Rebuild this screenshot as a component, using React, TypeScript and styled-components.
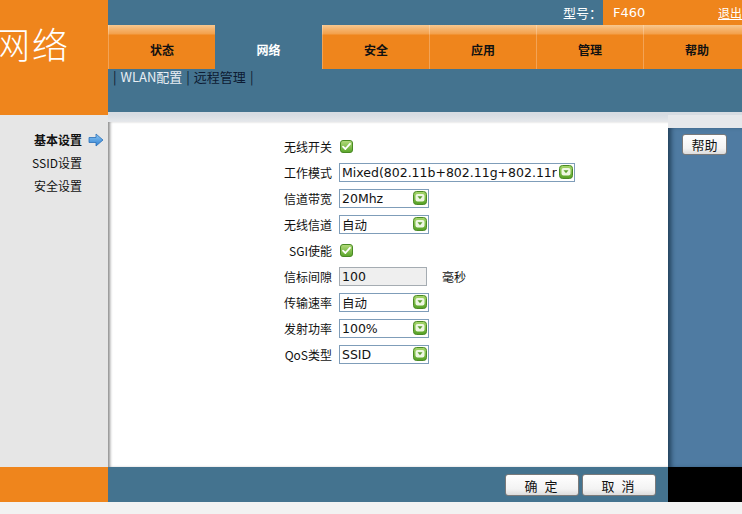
import React from "react";
import styled, { createGlobalStyle } from "styled-components";

const GlobalStyle = createGlobalStyle`
  html, body {
    margin: 0;
    padding: 0;
    background: #f2f2f2;
    font-family: "DejaVu Sans", "Noto Sans CJK SC", sans-serif;
    font-size: 12px;
  }
`;

const ORANGE = "#ef851c";
const BLUE = "#44738f";
const CJK = `"Noto Sans CJK SC", sans-serif`;
const LATIN = `"DejaVu Sans", "Noto Sans CJK SC", sans-serif`;

const tabs = ["状态", "网络", "安全", "应用", "管理", "帮助"];
const sideItems = ["基本设置", "SSID设置", "安全设置"];

type Field =
  | { label: string; kind: "check" }
  | { label: string; kind: "select"; value: string; wide?: boolean }
  | { label: string; kind: "text"; value: string; unit: string };

const fields: Field[] = [
  { label: "无线开关", kind: "check" },
  { label: "工作模式", kind: "select", value: "Mixed(802.11b+802.11g+802.11r", wide: true },
  { label: "信道带宽", kind: "select", value: "20Mhz" },
  { label: "无线信道", kind: "select", value: "自动" },
  { label: "SGI使能", kind: "check" },
  { label: "信标间隙", kind: "text", value: "100", unit: "毫秒" },
  { label: "传输速率", kind: "select", value: "自动" },
  { label: "发射功率", kind: "select", value: "100%" },
  { label: "QoS类型", kind: "select", value: "SSID" },
];

export default function App() {
  return (
    <Page>
      <GlobalStyle />
      <Header>
        <Logo>
          <LogoText>网络</LogoText>
        </Logo>
        <HeaderMain>
          <TopBar>
            <ModelLabel>型号：</ModelLabel>
            <ModelBox>
              <span>F460</span>
              <Logout>退出</Logout>
            </ModelBox>
          </TopBar>
          <TabBar>
            {tabs.map((t) => (
              <Tab key={t} $active={t === "网络"}>
                {t}
              </Tab>
            ))}
          </TabBar>
          <SubNav>
            <Sep>|</Sep>
            <SubLink $active>WLAN配置</SubLink>
            <Sep>|</Sep>
            <SubLink>远程管理</SubLink>
            <Sep>|</Sep>
          </SubNav>
          <Strip />
        </HeaderMain>
      </Header>

      <Body>
        <Sidebar>
          {sideItems.map((s, i) => (
            <SideItem key={s} $active={i === 0}>
              {s}
              {i === 0 && <ArrowIcon />}
            </SideItem>
          ))}
        </Sidebar>
        <Center>
          <Panel>
            <Form>
              {fields.map((f) => (
                <React.Fragment key={f.label}>
                  <Label>{f.label}</Label>
                  <Control>
                    {f.kind === "check" && <CheckIcon />}
                    {f.kind === "select" && (
                      <Select $wide={f.wide}>
                        <SelectText>{f.value}</SelectText>
                        <DropIcon />
                      </Select>
                    )}
                    {f.kind === "text" && (
                      <>
                        <TextBox>{f.value}</TextBox>
                        <Unit>{f.unit}</Unit>
                      </>
                    )}
                  </Control>
                </React.Fragment>
              ))}
            </Form>
          </Panel>
        </Center>
        <Right>
          <HelpPanel>
            <HelpButton>帮助</HelpButton>
          </HelpPanel>
        </Right>
      </Body>

      <Footer>
        <FooterLeft />
        <FooterMain>
          <Button>确 定</Button>
          <Button>取 消</Button>
        </FooterMain>
        <FooterRight />
      </Footer>
      <Bottom />
    </Page>
  );
}

function CheckIcon() {
  return (
    <svg width="13" height="13" viewBox="0 0 13 13" style={{ marginLeft: 1 }}>
      <defs>
        <linearGradient id="cg" x1="0" y1="0" x2="0" y2="1">
          <stop offset="0" stopColor="#b4dc7c" />
          <stop offset="1" stopColor="#5aa52a" />
        </linearGradient>
      </defs>
      <rect x="0.5" y="0.5" width="12" height="12" rx="2.5" fill="url(#cg)" stroke="#4a8a25" />
      <path d="M3 6.6 L5.4 9 L10 3.8" fill="none" stroke="#fff" strokeWidth="1.8" strokeLinecap="round" strokeLinejoin="round" />
    </svg>
  );
}

function DropIcon() {
  return (
    <svg width="14" height="14" viewBox="0 0 14 14">
      <defs>
        <linearGradient id="dg" x1="0" y1="0" x2="0" y2="1">
          <stop offset="0" stopColor="#a9d86e" />
          <stop offset="1" stopColor="#54a024" />
        </linearGradient>
      </defs>
      <rect x="0.5" y="0.5" width="13" height="13" rx="3" fill="url(#dg)" stroke="#4a8a25" />
      <rect x="2.5" y="3" width="9" height="7.5" rx="2" fill="#eef7e2" />
      <path d="M4.5 5.2 L9.5 5.2 L7 8.2 Z" fill="#5aa02c" />
    </svg>
  );
}

function ArrowIcon() {
  return (
    <svg width="16" height="14" viewBox="0 0 16 14" style={{ marginLeft: 6, marginRight: -22 }}>
      <defs>
        <linearGradient id="ag" x1="0" y1="0" x2="0" y2="1">
          <stop offset="0" stopColor="#8cc8f5" />
          <stop offset="1" stopColor="#2f7fd0" />
        </linearGradient>
      </defs>
      <path d="M1 4.5 H8 V1 L15 7 L8 13 V9.5 H1 Z" fill="url(#ag)" stroke="#2a6fb8" strokeWidth="0.8" />
    </svg>
  );
}

const Page = styled.div`
  width: 742px;
  height: 514px;
  display: flex;
  flex-direction: column;
  overflow: hidden;
`;

const Header = styled.div`
  display: flex;
  height: 115px;
  flex-shrink: 0;
`;

const Logo = styled.div`
  width: 108px;
  flex-shrink: 0;
  background: ${ORANGE};
  overflow: hidden;
`;

const LogoText = styled.div`
  font-family: ${CJK};
  font-weight: 300;
  font-size: 36px;
  line-height: 44px;
  color: #fff;
  margin: 21px 0 0 -6px;
  letter-spacing: 2px;
  white-space: nowrap;
`;

const HeaderMain = styled.div`
  flex: 1;
  min-width: 0;
  overflow: hidden;
  display: flex;
  flex-direction: column;
  background: ${BLUE};
`;

const TopBar = styled.div`
  height: 25px;
  display: flex;
  justify-content: flex-end;
  align-items: stretch;
`;

const ModelLabel = styled.div`
  font-family: ${CJK};
  color: #fff;
  font-size: 13px;
  display: flex;
  align-items: center;
  padding-right: 1px;
`;

const ModelBox = styled.div`
  width: 139px;
  background: ${ORANGE};
  color: #fff;
  font-family: ${LATIN};
  font-size: 13px;
  display: flex;
  align-items: center;
  justify-content: space-between;
  padding-left: 10px;
  box-sizing: border-box;
`;

const Logout = styled.span`
  font-family: ${CJK};
  font-size: 12px;
  text-decoration: underline;
`;

const TabBar = styled.div`
  height: 44px;
  display: flex;
`;

const Tab = styled.div<{ $active?: boolean }>`
  width: 107px;
  flex-shrink: 0;
  box-sizing: border-box;
  padding-top: 5px;
  display: flex;
  align-items: center;
  justify-content: center;
  font-family: ${CJK};
  font-weight: 700;
  font-size: 12px;
  color: ${(p) => (p.$active ? "#fff" : "#111")};
  background: ${(p) =>
    p.$active
      ? "transparent"
      : `linear-gradient(to bottom, #f8c890 0px, #f6b46e 4px, #f3a04a 9px, ${ORANGE} 10px, ${ORANGE} 100%)`};
  border-left: ${(p) => (p.$active ? "none" : "1px solid rgba(255,255,255,0.25)")};
`;

const SubNav = styled.div`
  height: 43px;
  display: flex;
  align-items: flex-start;
  padding: 0 0 0 5px;
  font-family: ${CJK};
  font-size: 13px;
  line-height: 16px;
  gap: 4px;
`;

const Sep = styled.span`
  color: #0d1b33;
`;

const SubLink = styled.span<{ $active?: boolean }>`
  color: ${(p) => (p.$active ? "#e8eef4" : "#0d1b33")};
`;

const Strip = styled.div`
  height: 3px;
  background: #d7dce2;
`;

const Body = styled.div`
  display: flex;
  height: 352px;
  flex-shrink: 0;
`;

const Sidebar = styled.div`
  width: 108px;
  flex-shrink: 0;
  background: #e6e6e6;
  display: flex;
  flex-direction: column;
  padding-top: 13px;
  box-sizing: border-box;
`;

const SideItem = styled.div<{ $active?: boolean }>`
  height: 23px;
  display: flex;
  align-items: center;
  justify-content: flex-end;
  padding-right: 26px;
  font-family: ${CJK};
  font-size: 12px;
  font-weight: ${(p) => (p.$active ? 700 : 400)};
  color: #111;
`;

const Center = styled.div`
  width: 560px;
  flex-shrink: 0;
  background: linear-gradient(to bottom, #d7dce2 0px, #e6e8eb 7px);
  padding-top: 7px;
  box-sizing: border-box;
  display: flex;
`;

const Panel = styled.div`
  flex: 1;
  background: #fff;
  box-shadow: inset 3px 0 3px -1px #8e8e8e;
  padding-top: 11px;
`;

const Form = styled.div`
  display: grid;
  grid-template-columns: 224px auto;
  column-gap: 7px;
  grid-auto-rows: 26px;
  align-items: center;
`;

const Label = styled.div`
  text-align: right;
  font-family: ${CJK};
  font-size: 12px;
  color: #111;
`;

const Control = styled.div`
  display: flex;
  align-items: center;
`;

const Select = styled.div<{ $wide?: boolean }>`
  width: ${(p) => (p.$wide ? "236px" : "90px")};
  height: 19px;
  box-sizing: border-box;
  border: 1px solid #7f9db9;
  background: #fff;
  display: flex;
  align-items: center;
  justify-content: space-between;
  padding: 0 1px 0 2px;
  overflow: hidden;
`;

const SelectText = styled.span`
  font-family: ${LATIN};
  font-size: 12.5px;
  color: #111;
  white-space: nowrap;
  overflow: hidden;
`;

const TextBox = styled.div`
  width: 88px;
  height: 19px;
  box-sizing: border-box;
  border: 1px solid #a5acb2;
  background: #efefef;
  font-family: ${LATIN};
  font-size: 12.5px;
  padding-left: 2px;
  display: flex;
  align-items: center;
  color: #111;
`;

const Unit = styled.span`
  margin-left: 15px;
  font-family: ${CJK};
  font-size: 12px;
  color: #111;
`;

const Right = styled.div`
  flex: 1;
  background: #e6e8eb;
  padding-top: 13px;
  display: flex;
`;

const HelpPanel = styled.div`
  flex: 1;
  background: #4f7ba2;
  box-shadow: inset 5px 0 5px -2px #22405a;
  padding: 6px 0 0 14px;
`;

const buttonBase = `
  box-sizing: border-box;
  border: 1px solid #7a7a7a;
  border-radius: 3px;
  background: linear-gradient(to bottom, #ffffff 0%, #f3f3f3 70%, #dcdcdc 100%);
  font-family: "Noto Sans CJK SC", sans-serif;
  font-size: 13px;
  color: #111;
  display: flex;
  align-items: center;
  justify-content: center;
`;

const HelpButton = styled.div`
  ${buttonBase}
  width: 45px;
  height: 21px;
`;

const Footer = styled.div`
  display: flex;
  height: 35px;
  flex-shrink: 0;
`;

const FooterLeft = styled.div`
  width: 108px;
  flex-shrink: 0;
  background: ${ORANGE};
`;

const FooterMain = styled.div`
  width: 560px;
  flex-shrink: 0;
  background: ${BLUE};
  display: flex;
  justify-content: flex-end;
  align-items: flex-start;
  padding: 7px 12px 0 0;
  box-sizing: border-box;
  gap: 3px;
`;

const Button = styled.div`
  ${buttonBase}
  width: 74px;
  height: 22px;
  letter-spacing: 2px;
`;

const FooterRight = styled.div`
  flex: 1;
  background: #000;
`;

const Bottom = styled.div`
  flex: 1;
  background: #f2f2f2;
`;
